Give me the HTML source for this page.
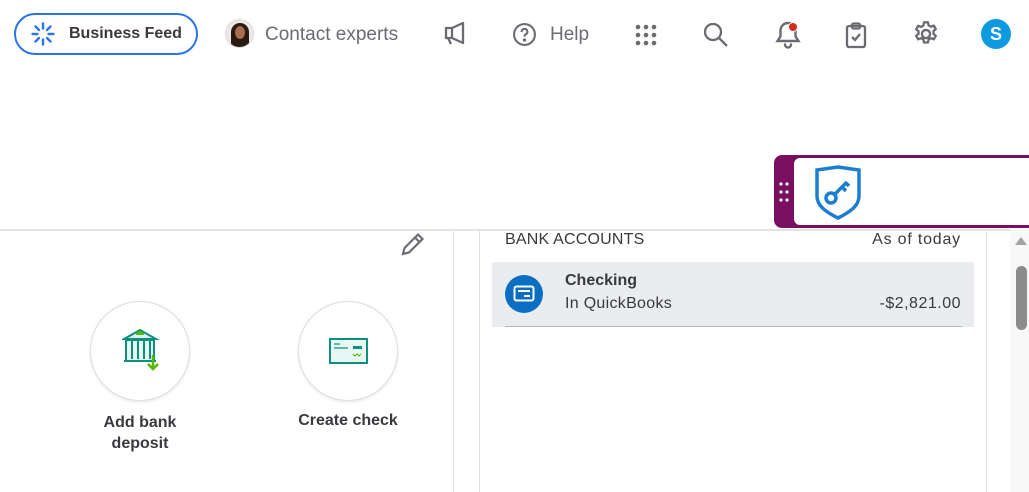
<!DOCTYPE html>
<html><head><style>
*{margin:0;padding:0;box-sizing:border-box}
body{width:1029px;height:492px;overflow:hidden;background:#fff;font-family:"Liberation Sans",sans-serif;position:relative;color:#393a3d}
.a{position:absolute}
.ic{position:absolute}
</style></head><body>
<div class="a" style="left:14px;top:13px;width:184px;height:42px;border:2px solid #2b74e8;border-radius:21px"></div>
<svg class="ic" style="left:31px;top:22px" width="24" height="24" viewBox="0 0 24 24" stroke="#2b74e8" stroke-width="2.4" stroke-linecap="round" fill="none"><path d="M12 1.5v5M12 17.5v5M1.5 12h5M17.5 12h5M4.5 4.5l3.5 3.5M19.5 4.5l-3.5 3.5M4.5 19.5l3.5-3.5M19.5 19.5l-3.5-3.5"/></svg>
<div class="a" style="left:69px;top:25px;font-size:16px;font-weight:bold;color:#393a3d">Business Feed</div>
<div class="a" style="left:225px;top:19px;width:29px;height:29px;border-radius:50%;background:#f0e6e4;border:1px solid #ddd;overflow:hidden"><div style="position:absolute;left:5px;top:3px;width:18px;height:24px;border-radius:9px 9px 4px 4px;background:#2a1a14"></div><div style="position:absolute;left:9px;top:6px;width:10px;height:13px;border-radius:50%;background:#a86c4e"></div></div>
<div class="a" style="left:265px;top:24px;font-size:19px;color:#6b6c72">Contact experts</div>
<svg class="ic" style="left:443px;top:21px" width="25" height="27" viewBox="0 0 25 27" fill="none" stroke="#6b6c72" stroke-width="2.3" stroke-linejoin="round"><path d="M3 7h6l11-5v20l-11-5H3zM9 7v10M5 17l3 6"/></svg>
<svg class="ic" style="left:512px;top:22px" width="25" height="25" viewBox="0 0 24 24" fill="none" stroke="#6b6c72" stroke-width="2"><circle cx="12" cy="12" r="10"/><path d="M9.2 9.5a2.8 2.8 0 115 1.6c-1 .8-2.2 1.2-2.2 2.9"/><circle cx="12" cy="17.3" r=".6" fill="#6b6c72"/></svg>
<div class="a" style="left:550px;top:24px;font-size:19px;color:#6b6c72">Help</div>
<svg class="ic" style="left:635px;top:24px" width="22" height="22" viewBox="0 0 22 22" fill="#6b6c72"><circle cx="3" cy="3" r="2.3"/><circle cx="11" cy="3" r="2.3"/><circle cx="19" cy="3" r="2.3"/><circle cx="3" cy="11" r="2.3"/><circle cx="11" cy="11" r="2.3"/><circle cx="19" cy="11" r="2.3"/><circle cx="3" cy="19" r="2.3"/><circle cx="11" cy="19" r="2.3"/><circle cx="19" cy="19" r="2.3"/></svg>
<svg class="ic" style="left:702px;top:21px" width="28" height="28" viewBox="0 0 28 28" fill="none" stroke="#6b6c72" stroke-width="2.3"><circle cx="11" cy="11" r="8"/><path d="M17 17l8 8"/></svg>
<svg class="ic" style="left:774px;top:19px" width="28" height="30" viewBox="0 0 28 30" fill="none" stroke="#6b6c72" stroke-width="2.4" stroke-linecap="round"><path d="M14 4a7.5 7.5 0 00-7.5 7.5v6L3.5 22h21l-3-4.5v-6A7.5 7.5 0 0014 4zM11 25.5a3 3 0 006 0"/></svg>
<div class="a" style="left:788px;top:22px;width:10px;height:10px;border-radius:50%;background:#d52b1e;border:1px solid #fff"></div>
<svg class="ic" style="left:844px;top:21px" width="24" height="28" viewBox="0 0 24 28" fill="none" stroke="#6b6c72" stroke-width="2.3"><rect x="3" y="5" width="18" height="21" rx="2"/><rect x="8" y="2.5" width="8" height="5" rx="1.5"/><path d="M8 16l3 3 5-6"/></svg>
<svg class="ic" style="left:912px;top:20px" width="28" height="28" viewBox="0 0 24 24" fill="none" stroke="#6b6c72" stroke-width="2" stroke-linejoin="round"><circle cx="12" cy="12" r="3.5"/><path d="M10.3 2h3.4l.5 2.6 2 1.1 2.5-.9 1.7 2.9-2 1.8v2.3l2 1.8-1.7 2.9-2.5-.9-2 1.1-.5 2.6h-3.4l-.5-2.6-2-1.1-2.5.9-1.7-2.9 2-1.8V9.7l-2-1.8 1.7-2.9 2.5.9 2-1.1z"/></svg>
<div class="a" style="left:981px;top:19px;width:30px;height:30px;border-radius:50%;background:#0d9ae0;color:#fff;font-weight:bold;font-size:18px;text-align:center;line-height:30px">S</div>

<div class="a" style="left:774px;top:155px;width:260px;height:73px;background:#7a0e60;border-radius:8px 0 0 8px"></div>
<div class="a" style="left:794px;top:158px;width:240px;height:67px;background:#fff;border-radius:6px 0 0 6px"></div>
<svg class="ic" style="left:778px;top:181px" width="12" height="22" fill="#fff"><circle cx="3" cy="3" r="1.6"/><circle cx="9" cy="3" r="1.6"/><circle cx="3" cy="11" r="1.6"/><circle cx="9" cy="11" r="1.6"/><circle cx="3" cy="19" r="1.6"/><circle cx="9" cy="19" r="1.6"/></svg>
<svg class="ic" style="left:814px;top:164px" width="48" height="56" viewBox="0 0 48 56" fill="none" stroke="#1a7fd0" stroke-width="3.5"><path d="M3 6l21-3 21 3v26c0 10-9 16-21 22C12 48 3 42 3 32z"/><circle cx="17" cy="34" r="5"/><path d="M21 30l12-12M28 23l4 4M32 19l3 3"/></svg>

<div class="a" style="left:0;top:229px;width:1010px;height:2px;background:#e4e4e6"></div>
<div class="a" style="left:453px;top:231px;width:1px;height:261px;background:#e0e0e2"></div>
<div class="a" style="left:479px;top:231px;width:1px;height:261px;background:#e0e0e2"></div>
<div class="a" style="left:986px;top:231px;width:1px;height:261px;background:#e0e0e2"></div>
<div class="a" style="left:1010px;top:229px;width:19px;height:263px;background:#f8f8f8"></div>
<div class="a" style="left:1015px;top:237px;width:0;height:0;border-left:6px solid transparent;border-right:6px solid transparent;border-bottom:8px solid #a3a3a3"></div>
<div class="a" style="left:1016px;top:266px;width:11px;height:64px;border-radius:6px;background:#8c8c8c"></div>

<svg class="ic" style="left:400px;top:231px" width="26" height="26" viewBox="0 0 26 26" fill="none" stroke="#6b6c72" stroke-width="2.2"><path d="M3 23l1.5-6L18 3.5l4.5 4.5L9 21.5zM15 6.5l4.5 4.5"/></svg>

<div class="a" style="left:90px;top:301px;width:100px;height:100px;border-radius:50%;border:1px solid #ddd;box-shadow:0 1px 3px rgba(0,0,0,.1)"></div>
<svg class="ic" style="left:122px;top:327px" width="40" height="48" viewBox="0 0 40 48" fill="none" stroke="#0d8f80" stroke-width="2"><path d="M2 12L18 3l16 9z" fill="#d9f3ef"/><path d="M14 8a4 4 0 018 0z" fill="#53b700" stroke="none"/><path d="M4 13h28v21H4z" fill="#e6f7f4"/><path d="M10 14v18M16 14v18M22 14v18M28 14v18M2 34h32"/><path d="M31 28v14M26 37l5 5 5-5" stroke="#53b700" stroke-width="2.5"/></svg>
<div class="a" style="left:84px;top:412px;width:112px;text-align:center;font-size:16px;font-weight:bold;line-height:21px;color:#393a3d">Add bank<br>deposit</div>

<div class="a" style="left:298px;top:301px;width:100px;height:100px;border-radius:50%;border:1px solid #ddd;box-shadow:0 1px 3px rgba(0,0,0,.1)"></div>
<svg class="ic" style="left:329px;top:338px" width="39" height="26" viewBox="0 0 39 26" fill="none"><rect x="1" y="1" width="37" height="24" fill="#e6f7f4" stroke="#0d8f80" stroke-width="2"/><path d="M5 6h6M5 10h14" stroke="#0d8f80" stroke-width="1.2"/><rect x="24" y="8" width="9" height="3" fill="#0d8f80"/><path d="M24 16l2 2 2-2 2 2 2-2" stroke="#53b700" stroke-width="1"/></svg>
<div class="a" style="left:282px;top:412px;width:132px;text-align:center;font-size:16px;font-weight:bold;color:#393a3d">Create check</div>

<div class="a" style="left:505px;top:231px;font-size:16px;color:#393a3d;letter-spacing:.2px">BANK ACCOUNTS</div>
<div class="a" style="right:68px;top:231px;font-size:16px;color:#393a3d;letter-spacing:.8px">As of today</div>
<div class="a" style="left:492px;top:262px;width:482px;height:65px;background:#ebecef"></div>
<div class="a" style="left:505px;top:326px;width:457px;height:1px;background:#b4b6ba"></div>
<div class="a" style="left:505px;top:275px;width:38px;height:38px;border-radius:50%;background:#0a6fc2"></div>
<svg class="ic" style="left:513px;top:285px" width="22" height="17" viewBox="0 0 22 17" fill="none" stroke="#fff" stroke-width="2"><rect x="1.5" y="1.5" width="19" height="14" rx="2"/><path d="M5 6h12M11 11h6"/></svg>
<div class="a" style="left:565px;top:272px;font-size:16px;font-weight:bold;color:#393a3d">Checking</div>
<div class="a" style="left:565px;top:295px;font-size:16px;color:#393a3d;letter-spacing:.3px">In QuickBooks</div>
<div class="a" style="right:68px;top:295px;font-size:16px;color:#393a3d;letter-spacing:.5px">-$2,821.00</div>
</body></html>
